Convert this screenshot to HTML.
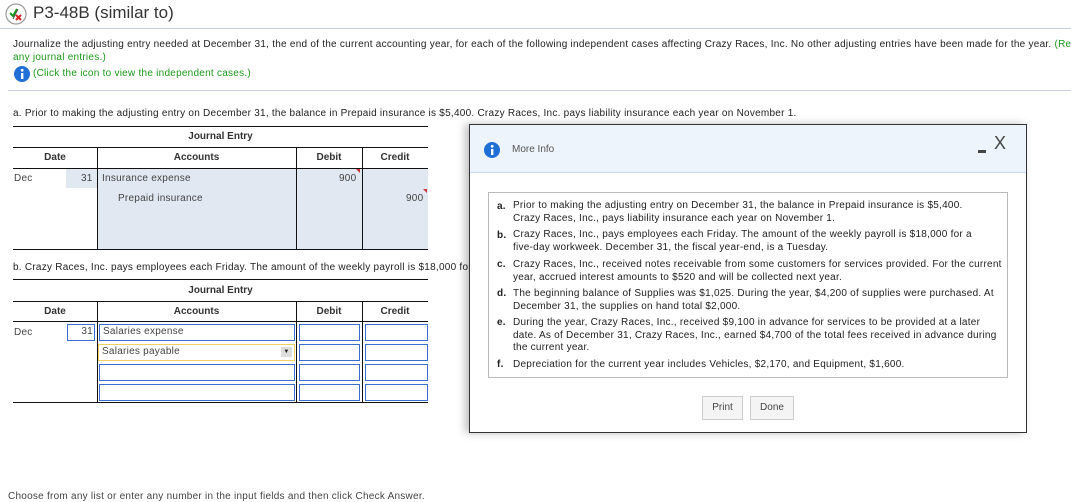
<!DOCTYPE html>
<html><head><meta charset="utf-8"><style>
*{margin:0;padding:0;box-sizing:border-box}
body{width:1071px;height:498px;overflow:hidden;background:#fff;font-family:"Liberation Sans",Arial,sans-serif;color:#222;position:relative;font-size:10px;letter-spacing:.25px}
.a{position:absolute;white-space:nowrap}
.g{color:#1a9a1a}
.hl{position:absolute;height:1px;background:#111}
.vl{position:absolute;width:1px;background:#111}
.th{position:absolute;font-weight:bold;color:#333;text-align:center;letter-spacing:0}
.inp{position:absolute;border:1.5px solid #3a6fd0;background:#fff;height:17px}
.li{position:absolute;left:24px;white-space:nowrap;line-height:12.5px}
.lt{position:absolute;left:8px;font-weight:bold}
</style></head><body>
<svg class="a" style="left:5px;top:3px" width="22" height="22" viewBox="0 0 22 22"><circle cx="11" cy="11" r="10" fill="#fff" stroke="#999" stroke-width="1.2"/><path d="M5 10 L8 13 L12 6" stroke="#1a9a1a" stroke-width="2" fill="none"/><path d="M13 6 L8 16" stroke="#555" stroke-width="1"/><path d="M11 12 L16 17 M16 12 L11 17" stroke="#d22" stroke-width="2"/></svg>
<div class="a" style="left:33px;top:3px;font-size:17px;color:#333;letter-spacing:0">P3-48B (similar to)</div>
<div style="position:absolute;left:0;top:28px;width:1071px;height:1px;background:#c8cedb"></div>
<div class="a" style="left:13px;top:39px">Journalize the adjusting entry needed at December 31, the end of the current accounting year, for each of the following independent cases affecting Crazy Races, Inc. No other adjusting entries have been made for the year. <span class="g">(Re</span></div>
<div class="a g" style="left:13px;top:52px">any journal entries.)</div>
<svg class="a" style="left:14px;top:66px" width="16" height="16" viewBox="0 0 16 16"><circle cx="8" cy="8" r="8" fill="#1f6fd6"/><rect x="7" y="7" width="2.4" height="6" fill="#fff"/><circle cx="8.2" cy="4.3" r="1.4" fill="#fff"/></svg>
<div class="a g" style="left:33px;top:68px">(Click the icon to view the independent cases.)</div>
<div style="position:absolute;left:8px;top:90px;width:1063px;height:1px;background:#c8cedb"></div>
<div class="a" style="left:13px;top:108px">a. Prior to making the adjusting entry on December 31, the balance in Prepaid insurance is $5,400. Crazy Races, Inc. pays liability insurance each year on November 1.</div>
<div style="position:absolute;left:97px;top:168px;width:331px;height:81px;background:#e1e8f2"></div>
<div style="position:absolute;left:66px;top:168px;width:31px;height:20px;background:#e1e8f2"></div>
<div class="hl" style="left:13px;top:126px;width:415px"></div>
<div class="th" style="left:13px;top:131px;width:415px">Journal Entry</div>
<div class="hl" style="left:13px;top:147px;width:415px"></div>
<div class="hl" style="left:13px;top:168px;width:415px"></div>
<div class="hl" style="left:13px;top:249px;width:415px"></div>
<div class="vl" style="left:97px;top:147px;height:102px"></div>
<div class="vl" style="left:296px;top:147px;height:102px"></div>
<div class="vl" style="left:362px;top:147px;height:102px"></div>
<div class="th" style="left:13px;top:152px;width:84px">Date</div>
<div class="th" style="left:97px;top:152px;width:199px">Accounts</div>
<div class="th" style="left:296px;top:152px;width:66px">Debit</div>
<div class="th" style="left:362px;top:152px;width:66px">Credit</div>
<div class="a" style="left:14px;top:173px;color:#444">Dec</div>
<div class="a" style="left:81px;top:173px;color:#444">31</div>
<div class="a" style="left:102px;top:173px;color:#444">Insurance expense</div>
<div class="a" style="left:118px;top:193px;color:#444">Prepaid insurance</div>
<div class="a" style="left:339px;top:173px;color:#444">900</div>
<div class="a" style="left:406px;top:193px;color:#444">900</div>
<div style="position:absolute;left:356px;top:169px;width:0;height:0;border-left:4px solid transparent;border-top:4px solid #c33"></div>
<div style="position:absolute;left:423px;top:189px;width:0;height:0;border-left:4px solid transparent;border-top:4px solid #c33"></div>
<div class="a" style="left:13px;top:262px">b. Crazy Races, Inc. pays employees each Friday. The amount of the weekly payroll is $18,000 for</div>
<div class="hl" style="left:13px;top:279px;width:415px"></div>
<div class="th" style="left:13px;top:285px;width:415px">Journal Entry</div>
<div class="hl" style="left:13px;top:301px;width:415px"></div>
<div class="hl" style="left:13px;top:321px;width:415px"></div>
<div class="hl" style="left:13px;top:402px;width:415px"></div>
<div class="vl" style="left:97px;top:301px;height:101px"></div>
<div class="vl" style="left:296px;top:301px;height:101px"></div>
<div class="vl" style="left:362px;top:301px;height:101px"></div>
<div class="th" style="left:13px;top:306px;width:84px">Date</div>
<div class="th" style="left:97px;top:306px;width:199px">Accounts</div>
<div class="th" style="left:296px;top:306px;width:66px">Debit</div>
<div class="th" style="left:362px;top:306px;width:66px">Credit</div>
<div class="a" style="left:14px;top:327px;color:#444">Dec</div>
<div class="inp" style="left:67px;top:324px;width:28px;text-align:right;padding-right:1px;color:#444;line-height:13px">31</div>
<div class="inp" style="left:99px;top:324px;width:196px;padding-left:3px;color:#444;line-height:13px">Salaries expense</div>
<div class="inp" style="left:98px;top:344px;width:197px;border-color:#f0d060;padding-left:3px;color:#444;line-height:13px">Salaries payable<span style="position:absolute;right:2px;top:2px;width:11px;height:10px;background:#ddd;font-size:6px;text-align:center;line-height:10px;color:#222">▼</span></div>
<div class="inp" style="left:99px;top:364px;width:196px"></div>
<div class="inp" style="left:99px;top:384px;width:196px"></div>
<div class="inp" style="left:299px;top:324px;width:61px"></div>
<div class="inp" style="left:299px;top:344px;width:61px"></div>
<div class="inp" style="left:299px;top:364px;width:61px"></div>
<div class="inp" style="left:299px;top:384px;width:61px"></div>
<div class="inp" style="left:365px;top:324px;width:63px"></div>
<div class="inp" style="left:365px;top:344px;width:63px"></div>
<div class="inp" style="left:365px;top:364px;width:63px"></div>
<div class="inp" style="left:365px;top:384px;width:63px"></div>
<div class="a" style="left:8px;top:491px;color:#444">Choose from any list or enter any number in the input fields and then click Check Answer.</div>
<div style="position:absolute;left:469px;top:124px;width:558px;height:309px;border:1px solid #333;background:#fff;box-shadow:-4px 0 8px rgba(0,0,0,.25)">
 <div style="position:absolute;left:0;top:0;width:556px;height:48px;background:#eef4fb;border-bottom:1px solid #c6dcf2"></div>
 <svg class="a" style="left:14px;top:17px" width="16" height="16" viewBox="0 0 16 16"><circle cx="8" cy="8" r="8" fill="#1f6fd6"/><rect x="7" y="7" width="2.4" height="6" fill="#fff"/><circle cx="8.2" cy="4.3" r="1.4" fill="#fff"/></svg>
 <div class="a" style="left:42px;top:19px;font-size:10px;color:#555;letter-spacing:0">More Info</div>
 <div class="a" style="left:508px;top:25px;width:8px;height:3px;background:#444"></div>
 <div class="a" style="left:524px;top:8px;font-size:18px;color:#444;letter-spacing:0">X</div>
 <div style="position:absolute;left:18px;top:67px;width:520px;height:186px;border:1px solid #bbb">
  <span class="lt" style="top:8px">a.</span><div class="li" style="top:7px">Prior to making the adjusting entry on December 31, the balance in Prepaid insurance is $5,400.<br>Crazy Races, Inc., pays liability insurance each year on November 1.</div>
  <span class="lt" style="top:37px">b.</span><div class="li" style="top:36px">Crazy Races, Inc., pays employees each Friday. The amount of the weekly payroll is $18,000 for a<br>five-day workweek. December 31, the fiscal year-end, is a Tuesday.</div>
  <span class="lt" style="top:66px">c.</span><div class="li" style="top:66px">Crazy Races, Inc., received notes receivable from some customers for services provided. For the current<br>year, accrued interest amounts to $520 and will be collected next year.</div>
  <span class="lt" style="top:95px">d.</span><div class="li" style="top:95px">The beginning balance of Supplies was $1,025. During the year, $4,200 of supplies were purchased. At<br>December 31, the supplies on hand total $2,000.</div>
  <span class="lt" style="top:124px">e.</span><div class="li" style="top:124px">During the year, Crazy Races, Inc., received $9,100 in advance for services to be provided at a later<br>date. As of December 31, Crazy Races, Inc., earned $4,700 of the total fees received in advance during<br>the current year.</div>
  <span class="lt" style="top:166px">f.</span><div class="li" style="top:166px">Depreciation for the current year includes Vehicles, $2,170, and Equipment, $1,600.</div>
 </div>
 <div class="a" style="left:232px;top:271px;width:41px;height:24px;border:1px solid #ccc;background:#f4f4f4;text-align:center;line-height:22px;color:#444;letter-spacing:0">Print</div>
 <div class="a" style="left:280px;top:271px;width:44px;height:24px;border:1px solid #ccc;background:#f4f4f4;text-align:center;line-height:22px;color:#444;letter-spacing:0">Done</div>
</div>
</body></html>
